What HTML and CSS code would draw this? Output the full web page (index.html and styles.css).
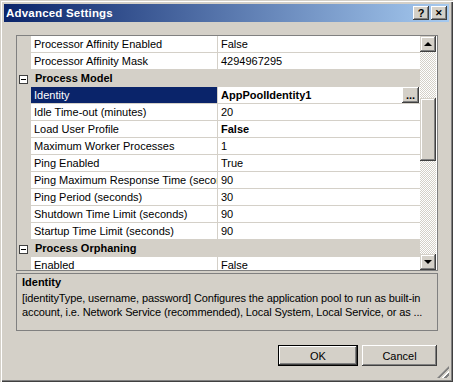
FILE: index.html
```html
<!DOCTYPE html>
<html lang="en">
  <head>
    <meta charset="UTF-8" />
    <title>Advanced Settings</title>
    <link rel="stylesheet" href="styles.css">
  </head>
  <body>
    <div class="window">
      <div class="titlebar">
        <span class="title">Advanced Settings</span>
        <div class="caption-btns">
          <button class="cap-btn">?</button>
          <button class="cap-btn close">&#x2715;</button>
        </div>
      </div>

      <div class="content">
        <div class="grid">
          <div class="rows">
            <div class="row"><div class="gutter"></div><div class="name">Processor Affinity Enabled</div><div class="value">False</div></div>
            <div class="row"><div class="gutter"></div><div class="name">Processor Affinity Mask</div><div class="value">4294967295</div></div>
            <div class="row category"><div class="gutter"><span class="toggle"></span></div><div class="name">Process Model</div></div>
            <div class="row selected">
              <div class="gutter"></div>
              <div class="name">Identity</div>
              <div class="value bold">AppPoolIdentity1<button class="dots">...</button></div>
            </div>
            <div class="row"><div class="gutter"></div><div class="name">Idle Time-out (minutes)</div><div class="value">20</div></div>
            <div class="row"><div class="gutter"></div><div class="name">Load User Profile</div><div class="value bold">False</div></div>
            <div class="row"><div class="gutter"></div><div class="name">Maximum Worker Processes</div><div class="value">1</div></div>
            <div class="row"><div class="gutter"></div><div class="name">Ping Enabled</div><div class="value">True</div></div>
            <div class="row"><div class="gutter"></div><div class="name">Ping Maximum Response Time (seconds)</div><div class="value">90</div></div>
            <div class="row"><div class="gutter"></div><div class="name">Ping Period (seconds)</div><div class="value">30</div></div>
            <div class="row"><div class="gutter"></div><div class="name">Shutdown Time Limit (seconds)</div><div class="value">90</div></div>
            <div class="row"><div class="gutter"></div><div class="name">Startup Time Limit (seconds)</div><div class="value">90</div></div>
            <div class="row category"><div class="gutter"><span class="toggle"></span></div><div class="name">Process Orphaning</div></div>
            <div class="row"><div class="gutter"></div><div class="name">Enabled</div><div class="value">False</div></div>
          </div>

          <div class="scrollbar">
            <div class="sb-btn"><span class="arrow up"></span></div>
            <div class="track track-top"></div>
            <div class="thumb"></div>
            <div class="track"></div>
            <div class="sb-btn"><span class="arrow down"></span></div>
          </div>
        </div>

        <div class="desc">
          <div class="desc-title">Identity</div>
          <p>[identityType, username, password] Configures the application pool to run as built-in<br>account, i.e. Network Service (recommended), Local System, Local Service, or as ...</p>
        </div>

        <div class="actions">
          <button class="btn default">OK</button>
          <button class="btn">Cancel</button>
        </div>
      </div>

      <div class="grip"></div>
    </div>
  </body>
</html>
```

FILE: styles.css
```css
body {
  margin: 0;
  font-family: "Liberation Sans", Arial, sans-serif;
  font-size: 11px;
  color: #000;
  background: #d4d0c8;
}
.window {
  position: relative;
  width: 453px;
  height: 382px;
  box-sizing: border-box;
  padding: 4px;
  background: #d4d0c8;
  box-shadow: inset 1px 1px #d4d0c8, inset 2px 2px #fff,
    inset -1px -1px #404040, inset -2px -2px #808080;
  display: flex;
  flex-direction: column;
}
.titlebar {
  height: 18px;
  display: flex;
  align-items: center;
  justify-content: space-between;
  padding: 0 2px 0 2px;
  background: linear-gradient(to right, #0a246a, #a6caf0);
}
.title {
  color: #fff;
  font-weight: bold;
  font-size: 11.5px;
  letter-spacing: 0.2px;
}
.caption-btns {
  display: flex;
  gap: 2px;
}
.cap-btn {
  width: 16px;
  height: 14px;
  padding: 0;
  border: none;
  background: #d4d0c8;
  font-family: "Liberation Sans", Arial, sans-serif;
  font-weight: bold;
  font-size: 11px;
  line-height: 14px;
  color: #000;
  box-shadow: inset -1px -1px #404040, inset 1px 1px #fff,
    inset -2px -2px #808080;
}
.cap-btn.close {
  font-size: 9px;
}
.content {
  flex: 1;
  padding: 13px 11px 0 12px;
  display: flex;
  flex-direction: column;
}
.grid {
  height: 234px;
  border: 1px solid #808080;
  display: flex;
  background: #fff;
}
.rows {
  width: 403px;
  overflow: hidden;
}
.row {
  display: grid;
  grid-template-columns: 14px 187px 202px;
  height: 17px;
}
.gutter {
  background: #d4d0c8;
  position: relative;
}
.name,
.value {
  box-sizing: border-box;
  height: 17px;
  padding: 1px 0 0 3px;
  line-height: 15px;
  border-bottom: 1px solid #d4d0c8;
  white-space: nowrap;
  overflow: hidden;
}
.name {
  border-right: 1px solid #d4d0c8;
}
.value {
  position: relative;
}
.bold {
  font-weight: bold;
}
.category .name {
  grid-column: 2 / 4;
  background: #d4d0c8;
  border-right: none;
  font-weight: bold;
  padding-left: 4px;
}
.toggle {
  position: absolute;
  left: 2px;
  top: 5px;
  width: 7px;
  height: 7px;
  border: 1px solid #404040;
  background: #fff;
}
.toggle::after {
  content: "";
  position: absolute;
  left: 1px;
  top: 3px;
  width: 5px;
  height: 1px;
  background: #000;
}
.selected .name {
  background: #0a246a;
  color: #fff;
}
.dots {
  position: absolute;
  right: 1px;
  top: 0;
  width: 17px;
  height: 16px;
  padding: 0;
  border: none;
  background: #d4d0c8;
  font-family: "Liberation Sans", Arial, sans-serif;
  font-size: 11px;
  font-weight: bold;
  line-height: 14px;
  box-shadow: inset -1px -1px #404040, inset 1px 1px #fff,
    inset -2px -2px #808080;
}
.scrollbar {
  width: 16px;
  display: flex;
  flex-direction: column;
}
.sb-btn,
.thumb {
  background: #d4d0c8;
  box-shadow: inset -1px -1px #404040, inset 1px 1px #d4d0c8,
    inset -2px -2px #808080, inset 2px 2px #fff;
}
.sb-btn {
  height: 16px;
  display: flex;
  align-items: center;
  justify-content: center;
}
.arrow {
  width: 0;
  height: 0;
  border-left: 4px solid transparent;
  border-right: 4px solid transparent;
}
.arrow.up {
  border-bottom: 4px solid #000;
  margin-top: -1px;
}
.arrow.down {
  border-top: 4px solid #000;
}
.track {
  flex: 1;
  background: repeating-conic-gradient(#fff 0 25%, #d4d0c8 0 50%) 0 0 / 2px 2px;
}
.track-top {
  flex: 0 0 46px;
}
.thumb {
  height: 63px;
}
.desc {
  margin-top: 2px;
  border: 1px solid #808080;
  padding: 1px 5px;
  box-sizing: border-box;
  height: 58px;
  line-height: 14px;
  overflow: hidden;
}
.desc-title {
  font-weight: bold;
  margin-bottom: 2px;
}
.desc p {
  margin: 0;
  white-space: nowrap;
  letter-spacing: -0.12px;
}
.actions {
  display: flex;
  justify-content: flex-end;
  gap: 4px;
  margin-top: 14px;
  padding-right: 1px;
}
.btn {
  width: 75px;
  height: 21px;
  padding: 0;
  border: none;
  background: #d4d0c8;
  font-family: "Liberation Sans", Arial, sans-serif;
  font-size: 11px;
  color: #000;
  box-shadow: inset -1px -1px #404040, inset 1px 1px #fff,
    inset -2px -2px #808080, inset 2px 2px #d4d0c8;
}
.btn.default {
  width: 80px;
  box-shadow: inset 0 0 0 1px #000, inset -2px -2px #404040,
    inset 2px 2px #fff, inset -3px -3px #808080;
}
.grip {
  position: absolute;
  right: 4px;
  bottom: 4px;
  width: 12px;
  height: 12px;
  background: repeating-linear-gradient(135deg, transparent 0 2px, #fff 2px 3px, #808080 3px 5px);
  clip-path: polygon(100% 0, 100% 100%, 0 100%);
}
```
